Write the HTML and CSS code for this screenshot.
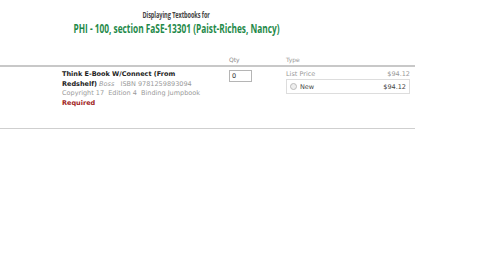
FILE: index.html
```html
<!DOCTYPE html>
<html>
<head>
<meta charset="utf-8">
<link rel="stylesheet" href="styles.css">
</head>
<body>
<div class="header">
  <div class="sub">Displaying Textbooks for</div>
  <div class="title">PHI - 100, section FaSE-13301 (Paist-Riches, Nancy)</div>
</div>
<div class="books">
  <div class="row head">
    <div class="c-pad"></div>
    <div class="c-book"></div>
    <div class="c-qty">Qty</div>
    <div class="c-type">Type</div>
  </div>
  <div class="row item">
    <div class="c-pad"></div>
    <div class="c-book">
      <div class="line"><span class="name">Think E-Book W/Connect (From</span></div>
      <div class="line"><span class="name">Redshelf)</span> <span class="author">Boss</span> <span class="meta">&nbsp; ISBN 9781259893094</span></div>
      <div class="line meta">Copyright 17 &nbsp;Edition 4 &nbsp;Binding Jumpbook</div>
      <div class="line req">Required</div>
    </div>
    <div class="c-qty"><div class="qty-box">0</div></div>
    <div class="c-type">
      <div class="list"><span>List Price</span><span>$94.12</span></div>
      <div class="opt"><span class="radio"></span><span class="new">New</span><span class="price">$94.12</span></div>
    </div>
  </div>
</div>
</body>
</html>
```
FILE: styles.css
```css
html, body { margin: 0; padding: 0; background: #fff; }
body { font-family: "DejaVu Sans", Verdana, sans-serif; font-size: 6.5px; color: #333; }

.header { width: 353px; text-align: center; padding-top: 10px; }
.sub {
  font-family: "Open Sans", sans-serif; font-weight: 700; font-size: 8px; color: #444;
  display: inline-block; transform: scaleX(0.7); letter-spacing: -0.1px; line-height: 10px;
}
.title {
  font-family: "Open Sans", sans-serif; font-weight: 700; font-size: 12.5px; color: #1f8a4a;
  line-height: 16px; margin-top: 1px; transform: scaleX(0.665); white-space: nowrap;
}

.books { width: 415px; margin-top: 19px; border-bottom: 1px solid #cfcfcf; }
.row { display: grid; grid-template-columns: 62px 167px 47px 139px; }
.head { color: #888; font-size: 6px; line-height: 8px; padding-bottom: 1px; border-bottom: 2px solid #c8c8c8; }
.item { padding-top: 3px; height: 58px; }
.c-book { padding-right: 25px; }
.line { height: 9.5px; line-height: 9.5px; white-space: nowrap; }
.name { font-weight: 700; color: #222; }
.author { font-style: italic; color: #999; }
.meta { color: #9a9a9a; }
.req { font-weight: 700; color: #a01c1c; }

.qty-box { width: 19px; height: 10px; border: 1px solid #b5b5b5; line-height: 10px; padding-left: 2px; box-sizing: content-box; color: #333; }

.c-type { padding: 0 5px 0 10px; color: #999; }
.list { display: flex; justify-content: space-between; line-height: 9px; }
.opt { display: flex; align-items: center; border: 1px solid #ddd; height: 13px; padding: 0 3px; color: #444; }
.radio { width: 5px; height: 5px; border: 1px solid #bbb; border-radius: 50%; background: #eee; margin-right: 3px; }
.new { flex: 1; }
```
